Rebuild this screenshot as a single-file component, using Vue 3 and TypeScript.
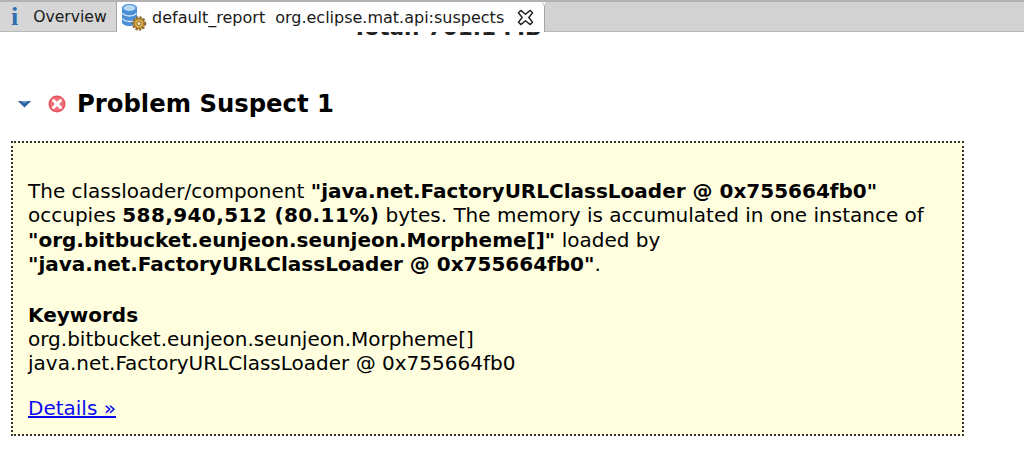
<template>
  <div class="page">
    <div class="tabbar">
      <div class="tab overview">
        <span class="info-i">i</span>
        <span class="overview-label">Overview</span>
      </div>
      <div class="tab active">
        <svg class="db-icon" width="26" height="28" viewBox="0 0 26 28" aria-hidden="true">
          <path d="M1 5C1 2.500 5 1 8.500 1S16 2.500 16 5V19c0 2.500-4 4-7.500 4S1 21.500 1 19Z" fill="#4a90d9" />
          <ellipse cx="8.500" cy="5" rx="6" ry="3" fill="#b9daf5" />
          <path d="M1.500 10c1.500 2.300 4.500 3 7 3s5.500-.7 7-3M1.500 15.500c1.500 2.300 4.500 3 7 3s5.500-.7 7-3" fill="none" stroke="#dcecf9" stroke-width="1.300" />
          <circle cx="18" cy="20.500" r="6" fill="#d8a53e" stroke="#8a6a3a" stroke-width="2.500" stroke-dasharray="2.200 1.300" />
          <circle cx="18" cy="20.500" r="4.600" fill="#dfae48" stroke="#94702f" stroke-width=".8" />
          <circle cx="18" cy="20.500" r="2" fill="#f2e3bd" stroke="#7d6030" stroke-width=".8" />
        </svg>
        <span class="tab-name">default_report</span>
        <span class="tab-query">org.eclipse.mat.api:suspects</span>
        <svg class="close" width="17" height="17" viewBox="0 0 18 18" aria-hidden="true">
          <path d="M1.500 4 4 1.500 9 5.500 14 1.500 16.500 4 12.500 9 16.500 14 14 16.500 9 12.500 4 16.500 1.500 14 5.500 9Z" fill="#fff" stroke="#222" stroke-width="1.500" stroke-linejoin="round" />
        </svg>
      </div>
      <div class="tab-rest"></div>
    </div>

    <div class="content">
      <div class="total">Total: 701.1 MB</div>

      <div class="section-head">
        <svg class="twisty" width="15" height="8" viewBox="0 0 16 9" aria-hidden="true">
          <path d="M.5 1h15L8 8.500Z" fill="#2f5f9c" />
          <path d="M3.500 1h9L8 4Z" fill="#6c9ccc" />
        </svg>
        <svg class="err" width="18" height="18" viewBox="0 0 18 18" aria-hidden="true">
          <circle cx="9" cy="9" r="8.500" fill="#e8505f" />
          <circle cx="9" cy="9" r="7" fill="#ef6f78" />
          <path d="M5.500 5.500 12.500 12.500M12.500 5.500 5.500 12.500" stroke="#fff" stroke-width="3" stroke-linecap="round" />
        </svg>
        <h2>Problem Suspect 1</h2>
      </div>

      <div class="suspect-box">
        <p class="summary">
          The classloader/component <b>"java.net.FactoryURLClassLoader @ 0x755664fb0"</b><br />
          occupies <b class="wide">588,940,512 (80.11%)</b> bytes. The memory is accumulated in one instance of<br />
          <b>"org.bitbucket.eunjeon.seunjeon.Morpheme[]"</b> loaded by<br />
          <b>"java.net.FactoryURLClassLoader @ 0x755664fb0"</b>.
        </p>
        <p class="kw">
          <b>Keywords</b><br />
          <span v-for="kw in keywords" :key="kw">{{ kw }}<br /></span>
        </p>
        <p><a href="#">Details »</a></p>
      </div>
    </div>
  </div>
</template>

<script setup lang="ts">
const keywords: string[] = [
  'org.bitbucket.eunjeon.seunjeon.Morpheme[]',
  'java.net.FactoryURLClassLoader @ 0x755664fb0',
];
</script>

<style>
html, body { background: #fff; }
</style>

<style scoped>
.page {
  width: 1024px;
  height: 463px;
  overflow: hidden;
  background: #fff;
  font-family: "DejaVu Sans", Verdana, sans-serif;
  color: #000;
}
.tabbar {
  display: flex;
  height: 32px;
  box-sizing: border-box;
  border-top: 2px solid #b2b2b2;
  font-size: 16px;
  color: #1a1a1a;
}
.tab {
  display: flex;
  align-items: center;
  white-space: nowrap;
  box-sizing: border-box;
}
.overview {
  width: 117px;
  padding-left: 11px;
  gap: 15px;
  background: #d6d6d6;
  border-bottom: 1px solid #b8b8b8;
  border-right: 1px solid #a4a4a4;
}
.overview-label { font-size: 15.600px; }
.info-i {
  font-family: "Liberation Serif", serif;
  font-weight: 700;
  font-size: 26px;
  line-height: 1;
  color: #2f6fb0;
}
.active {
  width: 428px;
  padding-left: 4px;
  background: #fff;
  border-top-right-radius: 5px;
  border-right: 1px solid #a4a4a4;
}
.db-icon { flex: none; }
.tab-name { margin-left: 5px; }
.tab-query { margin-left: 10px; }
.close { margin-left: 13px; flex: none; }
.tab-rest {
  flex: 1;
  background: #d2d2d2;
  border-bottom: 1px solid #b8b8b8;
}
.content {
  overflow: hidden;
  height: 431px;
}
.total {
  margin-top: -18px;
  text-align: center;
  width: 894px;
  font-size: 21.600px;
  font-weight: 700;
  line-height: 28px;
  color: #222;
}
.section-head {
  display: flex;
  align-items: center;
  margin-top: 46px;
  height: 32px;
  padding-left: 17px;
}
.err { margin-left: 16px; }
h2 {
  margin: 0 0 0 11px;
  font-size: 24.300px;
  font-weight: 700;
  line-height: 32px;
}
.suspect-box {
  width: 953px;
  height: 295px;
  margin: 21px 0 0 11px;
  box-sizing: border-box;
  padding: 36px 0 0 15px;
  background: #ffffe0;
  border: 2px dotted #333;
  font-size: 20px;
  line-height: 24.300px;
  white-space: nowrap;
}
p { margin: 0; }
.summary { margin-bottom: 26.700px; }
.kw { margin-bottom: 20px; }
.wide { letter-spacing: .4px; }
a { color: #0a0aee; }
</style>
